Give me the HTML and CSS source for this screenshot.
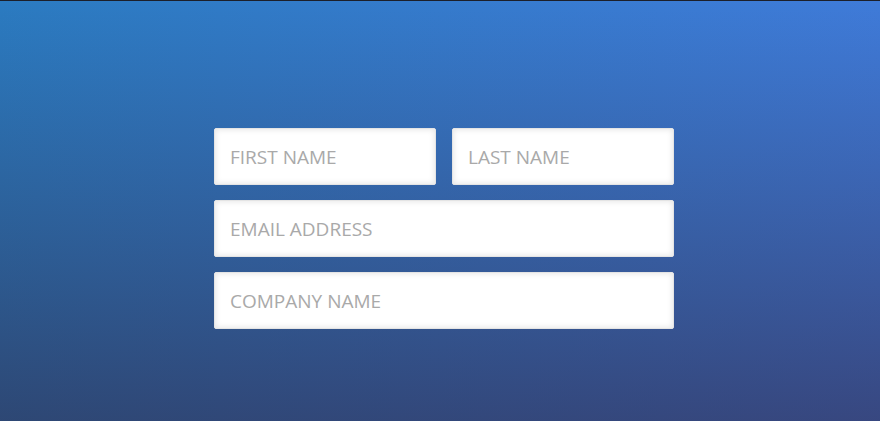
FILE: index.html
```html
<!DOCTYPE html>
<html>
  <head>
    <link rel="stylesheet" href="styles.css">
  </head>
  <body>
    <div class="page">
      <form class="signup">
        <div class="row">
          <input type="text" class="field" placeholder="FIRST NAME">
          <input type="text" class="field" placeholder="LAST NAME">
        </div>
        <div class="row">
          <input type="email" class="field" placeholder="EMAIL ADDRESS">
        </div>
        <div class="row">
          <input type="text" class="field" placeholder="COMPANY NAME">
        </div>
      </form>
    </div>
  </body>
</html>
```

FILE: styles.css
```css
* {
  box-sizing: border-box;
}

html, body {
  margin: 0;
  height: 100%;
}

body {
  border-top: 1px solid #1c1f2a;
}

.page {
  height: 420px;
  padding: 127px 0 0 214px;
  background:
    linear-gradient(to bottom, rgba(48, 20, 40, 0) 0%, rgba(48, 20, 40, 0.5) 100%),
    linear-gradient(to right, #2b7bc1 0%, #3f7bd9 100%);
}

.signup {
  width: 460px;
  display: flex;
  flex-direction: column;
  gap: 15px;
}

.row {
  display: flex;
  gap: 16px;
}

.field {
  flex: 1;
  min-width: 0;
  height: 57px;
  padding: 0 15px;
  border: 1px solid #e4e4e4;
  border-radius: 2px;
  background: #fff;
  box-shadow: inset 0 0 6px rgba(0, 0, 0, 0.12);
  font-family: 'Open Sans', sans-serif;
  font-size: 19px;
  color: #555;
  outline: none;
}

.field::placeholder {
  color: #a9a9a9;
}
```
